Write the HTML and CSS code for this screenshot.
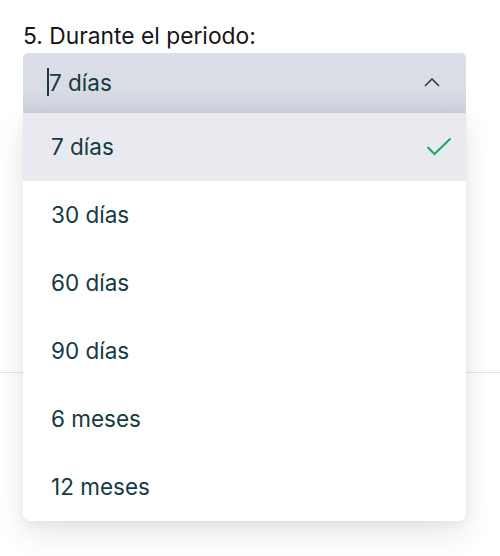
FILE: index.html
```html
<!DOCTYPE html>
<html lang="es">
<head>
<meta charset="utf-8">
<link rel="stylesheet" href="styles.css">
</head>
<body>
<div class="field">
  <label class="label">5. Durante el periodo:</label>
  <div class="select-wrap">
    <div class="select">
      <span class="value"><span class="caret"></span>7 días</span>
      <svg class="chev" width="16" height="9" viewBox="0 0 16 9"><path d="M1 8 L8 1 L15 8" fill="none" stroke="#1d3b44" stroke-width="1.5"/></svg>
    </div>
    <ul class="menu">
      <li class="item selected"><span>7 días</span>
        <svg class="check" width="26" height="19" viewBox="0 0 26 19"><path d="M1.5 10 L8.5 17 L24.5 1.5" fill="none" stroke="#17a862" stroke-width="2"/></svg>
      </li>
      <li class="item"><span>30 días</span></li>
      <li class="item"><span>60 días</span></li>
      <li class="item"><span>90 días</span></li>
      <li class="item"><span>6 meses</span></li>
      <li class="item"><span>12 meses</span></li>
    </ul>
  </div>
</div>
<div class="divider"></div>
</body>
</html>
```
FILE: styles.css
```css
html, body { margin: 0; padding: 0; background: #fff; }
body { font-family: Inter, "Noto Sans", sans-serif; width: 500px; height: 556px; overflow: hidden; }
.field { padding: 21px 34px 0 23px; }
.label { display: block; font-size: 22.8px; line-height: 29px; color: #151515; margin-bottom: 3px; }
.select-wrap { position: relative; }
.select {
  height: 60px; display: flex; align-items: center; justify-content: space-between;
  padding: 0 26px 0 24px;
  background: linear-gradient(#dcdfe8 0%, #d9dbe5 60%, #cfd1dc 100%);
  border-radius: 5px 5px 0 0;
}
.value { font-size: 22.5px; color: #143a42; display: flex; align-items: center; padding-bottom: 2px; }
.caret { display: inline-block; width: 2px; height: 28px; background: #143a42; margin-right: 0; }
.chev { margin-top: -2px; }
.menu {
  position: absolute; left: 0; right: 0; top: 60px; margin: 0; padding: 0; list-style: none;
  background: #fff; border-radius: 0 0 7px 7px;
  box-shadow: 0 12px 30px rgba(0,0,0,0.10), 0 2px 10px rgba(0,0,0,0.05);
  overflow: hidden; z-index: 2;
}
.item {
  height: 68px; box-sizing: border-box; display: flex; align-items: center; justify-content: space-between;
  padding: 0 14px 2px 28px; font-size: 22.5px; color: #143a42;
}
.item.selected { background: #e9eaf0; }
.check { margin-right: 0; margin-top: 0; }
.divider { height: 1px; background: #e3e3e3; margin-top: 259px; }
```
